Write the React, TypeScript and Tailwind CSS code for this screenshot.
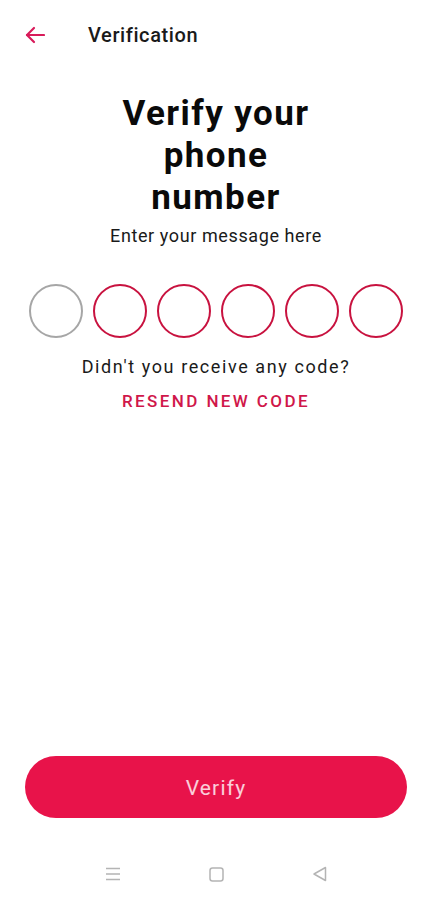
import React from 'react';

const CODE_LEN = 6;

export default function App() {
  return (
    <div className="h-[900px] w-full bg-white flex flex-col font-['Roboto',sans-serif] text-[#111]">
      <header className="h-[69px] flex items-center pl-[24px]">
        <button type="button" className="w-[22px] h-[22px] flex items-center justify-center text-[#d81b5a]">
          <svg width="20" height="18" viewBox="0 0 20 18" fill="none" stroke="currentColor" strokeWidth="2.2" strokeLinecap="round" strokeLinejoin="round">
            <path d="M19 9H2" />
            <path d="M9 2L2 9l7 7" />
          </svg>
        </button>
        <h1 className="ml-[42px] mt-[1px] text-[20px] font-medium tracking-[0.6px] text-[#1a1a1a]">Verification</h1>
      </header>

      <div className="flex flex-col items-center pt-[24px]">
        <h2 className="text-[35px] leading-[42px] font-bold text-center w-[240px] tracking-[1.4px] text-[#0a0a0a]">Verify your phone number</h2>
        <p className="mt-[6px] text-[18px] leading-[22px] tracking-[0.6px] text-[#1a1a1a]">Enter your message here</p>

        <div className="mt-[37px] flex gap-[10px]">
          {Array.from({ length: CODE_LEN }).map((_, i) => (
            <input
              key={i}
              maxLength={1}
              className={`w-[54px] h-[54px] rounded-full border-2 bg-white text-center text-xl outline-none ${i === 0 ? 'border-[#a6a6a6]' : 'border-[#c8123f]'}`}
            />
          ))}
        </div>

        <p className="mt-[18px] text-[18px] leading-[22px] tracking-[1.6px] text-[#1a1a1a]">Didn't you receive any code?</p>
        <button type="button" className="mt-[12px] text-[17px] leading-[22px] font-medium tracking-[2.4px] text-[#d0174a]">RESEND NEW CODE</button>
      </div>

      <div className="flex-1" />

      <div className="px-[25px]">
        <button type="button" className="w-full h-[62px] rounded-full bg-[#e8134a] text-white/80 text-[21px] leading-[62px] tracking-[1.2px]">
          <span className="relative top-[1px]">Verify</span>
        </button>
      </div>

      <nav className="h-[82px] flex items-end justify-center pb-[18px]">
        <div className="flex items-center gap-[88px] text-[#b4b4b4]">
          <svg width="16" height="16" viewBox="0 0 16 16" fill="none" stroke="currentColor" strokeWidth="1.4">
            <path d="M1 2.5h14M1 8h14M1 13.5h14" />
          </svg>
          <svg width="15" height="15" viewBox="0 0 15 15" fill="none" stroke="currentColor" strokeWidth="1.5">
            <rect x="1" y="1" width="13" height="13" rx="2.5" />
          </svg>
          <svg width="15" height="16" viewBox="0 0 15 16" fill="none" stroke="currentColor" strokeWidth="1.5" strokeLinejoin="round">
            <path d="M13.5 1.5v13L2 8z" />
          </svg>
        </div>
      </nav>
    </div>
  );
}
